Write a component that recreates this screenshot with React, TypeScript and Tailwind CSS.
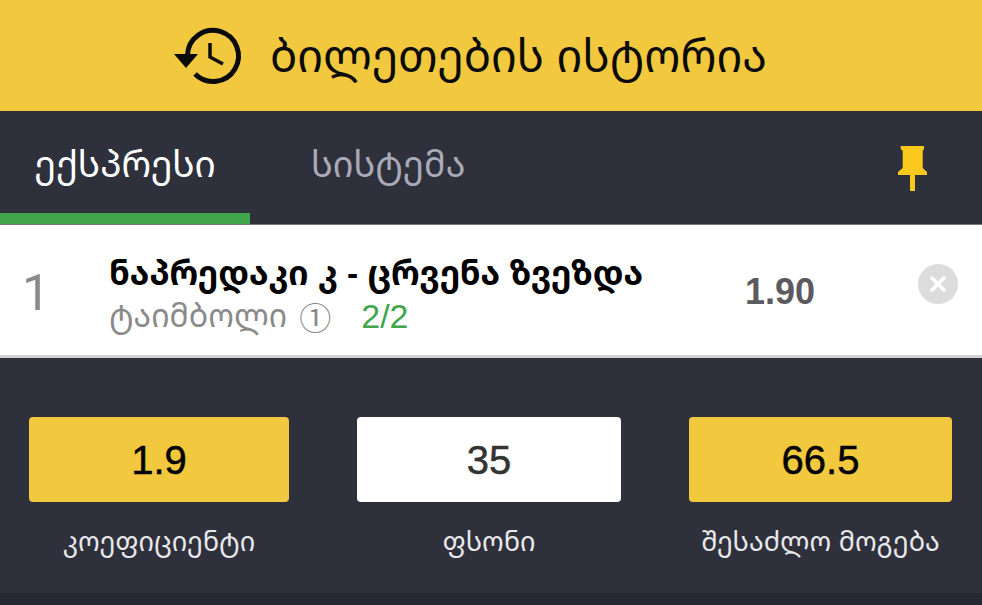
import { X } from "lucide-react";

const font = "font-['Liberation_Sans','Noto_Sans_Georgian','DejaVu_Sans',sans-serif]";

function HistoryIcon() {
    return (
        <svg viewBox="0 0 78 78" className="w-[78px] h-[78px] mr-[22px]" fill="none">
            <path d="M17.5 38A25.5 25.5 0 1 1 25 57" stroke="#0b0b0b" strokeWidth="5" />
            <path d="M4 37h24L16 51z" fill="#0b0b0b" />
            <path d="M40 26V40L53 47" stroke="#0b0b0b" strokeWidth="3.5" />
        </svg>
    );
}

function PinIcon() {
    return (
        <svg viewBox="0 0 30 46" className="w-[30px] h-[46px]" fill="#fbc91b">
            <path d="M2.700 0H26V3L24.700 5V22L29 26V29H17V45H12V29H0V26L4.700 22V5L2.700 3z" />
        </svg>
    );
}

function Stat({ value, label, bg, color, width }: { value: string; label: string; bg: string; color: string; width: string }) {
    return (
        <div className={`flex flex-col items-center ${width}`}>
            <div className={`w-full h-[85px] rounded-[4px] flex items-center justify-center text-[40px] [-webkit-text-stroke:0.5px] ${bg} ${color}`}>{value}</div>
            <div className="mt-[22px] text-[27px] leading-[36px] text-[#e8e8ea] whitespace-nowrap">{label}</div>
        </div>
    );
}

export default function App() {
    return (
        <div className={`w-[982px] h-[605px] overflow-hidden flex flex-col bg-[#2e303c] ${font}`}>
            <div className="h-[111px] shrink-0 bg-[#f2c83f] flex items-center pl-[170px]">
                <HistoryIcon />
                <span className="mt-[2px] leading-[36px] text-[45px] text-[#0b0b0b] whitespace-nowrap">ბილეთების ისტორია</span>
            </div>

            <div className="h-[114px] shrink-0 flex border-b border-[#77787f]">
                <div className="w-[250px] h-full flex items-center justify-center border-b-[11px] border-[#43a54b] pt-[6px]">
                    <span className="leading-[30px] text-[37px] text-white">ექსპრესი</span>
                </div>
                <div className="h-full flex items-center pl-[61px] border-b-[11px] border-transparent pt-[6px]">
                    <span className="leading-[30px] text-[36px] text-[#a9aab8]">სისტემა</span>
                </div>
                <div className="ml-auto mr-[54px] flex items-center pt-[3px]">
                    <PinIcon />
                </div>
            </div>

            <div className="h-[133px] shrink-0 bg-white border-b-[3px] border-[#d2d2d4] flex items-center">
                <div className="w-[109px] pl-[22px] pt-[6px] text-[50px] font-['Roboto',sans-serif] text-[#8a8a8a]">1</div>
                <div className="flex-1 min-w-0 pt-[10px]">
                    <div className="text-[33.5px] leading-[40px] font-bold text-black whitespace-nowrap">ნაპრედაკი კ - ცრვენა ზვეზდა</div>
                    <div className="mt-[2px] flex items-center text-[32px] leading-[40px] text-[#8a8a8a] whitespace-nowrap">
                        <span>ტაიმბოლი</span>
                        <span className="ml-[12px] font-['Noto_Sans_CJK_SC',sans-serif] text-[32px]">①</span>
                        <span className="ml-[30px] text-[#43a54b] text-[34px]">2/2</span>
                    </div>
                </div>
                <div className="w-[173px] pt-[4px] text-[36px] font-bold text-[#5b5b5f]">1.90</div>
                <div className="w-[40px] h-[40px] rounded-full bg-[#dcdcdc] flex items-center justify-center mr-[24px] mb-[12px]">
                    <X className="w-[24px] h-[24px] text-white" strokeWidth={3.5} />
                </div>
            </div>

            <div className="flex-1 flex justify-between pl-[29px] pr-[30px] pt-[59px]">
                <Stat value="1.9" label="კოეფიციენტი" bg="bg-[#f2c83f]" color="text-black" width="w-[260px]" />
                <Stat value="35" label="ფსონი" bg="bg-white" color="text-[#333333]" width="w-[264px]" />
                <Stat value="66.5" label="შესაძლო მოგება" bg="bg-[#f2c83f]" color="text-black" width="w-[263px]" />
            </div>
            <div className="h-[12px] shrink-0 bg-[#262832]" />
        </div>
    );
}
